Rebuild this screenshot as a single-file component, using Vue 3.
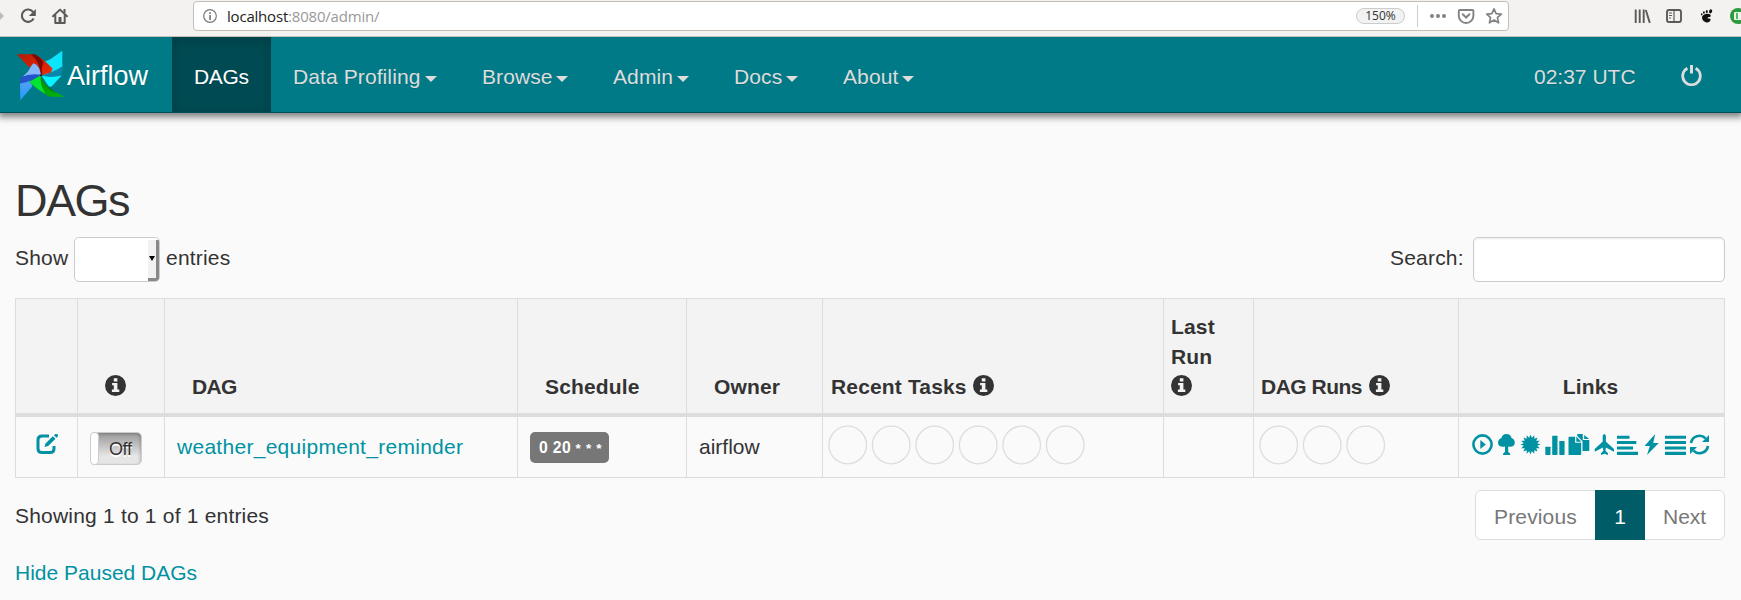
<script setup>
const menus = [
  { label: 'Data Profiling', cls: 'm-data' },
  { label: 'Browse', cls: 'm-browse' },
  { label: 'Admin', cls: 'm-admin' },
  { label: 'Docs', cls: 'm-docs' },
  { label: 'About', cls: 'm-about' },
]
const burst = Array.from({ length: 32 }, (_, i) => {
  const r = i % 2 ? 6.9 : 10
  const a = (i * Math.PI) / 16
  return `${(10.5 + r * Math.sin(a)).toFixed(2)},${(10.5 - r * Math.cos(a)).toFixed(2)}`
}).join(' ')
const infoPath =
  'M10.5 0a10.5 10.5 0 1 0 0 21a10.5 10.5 0 1 0 0-21zM8.8 3.2h3.6v3.2H8.800zM7.100 8h5.300v6.600h1.900v2.400H6.900v-2.400h1.900v-4.300H7.100z'
</script>

<template>
  <div class="page">
    <div class="chrome">
      <svg class="tools-left" viewBox="0 0 80 36" width="80" height="36" fill="none" stroke="#5b5a58">
        <path d="M0 12l4 4-4 4z" fill="#bbb" stroke="none" />
        <path d="M33.2 12.2A6.2 6.2 0 1 0 33.6 18.5" stroke-width="2.1" />
        <path d="M35.8 9v7h-7z" fill="#5b5a58" stroke="none" />
        <path d="M53 16.3L60 9.6l7 6.7M55.3 15v8h9.4v-8" stroke-width="2" stroke-linejoin="round" stroke-linecap="round" />
        <path d="M58.5 17h3v5.5h-3zM63.5 9h2v4h-2z" fill="#5b5a58" stroke="none" />
      </svg>
      <div class="urlbar">
        <svg class="site-info" viewBox="0 0 14 14" width="14" height="14">
          <circle cx="7" cy="7" r="6.3" fill="none" stroke="#7a7a7a" stroke-width="1.2" />
          <path d="M6.2 3.2h1.7v1.7H6.2zM6.2 6h1.7v5H6.2z" fill="#7a7a7a" />
        </svg>
        <span class="url"><b>localhost</b>:8080/admin/</span>
        <span class="zoom-level">150%</span>
        <span class="sep"></span>
        <svg class="url-actions" viewBox="0 0 74 18" width="74" height="18" fill="none" stroke="#838383">
          <g fill="#838383" stroke="none"><circle cx="2" cy="9" r="2" /><circle cx="8" cy="9" r="2" /><circle cx="14" cy="9" r="2" /></g>
          <path d="M29.8 3h12.6q1 0 1 1v4.7a7.3 7.3 0 0 1-14.6 0V4q0-1 1-1z" stroke-width="1.9" />
          <path d="M32.8 7.3l3.3 3.2 3.3-3.2" stroke-width="2" stroke-linecap="round" />
          <path d="M64 1.8l2.1 4.8 5.2.5-3.9 3.5 1.2 5.2-4.6-2.8-4.6 2.8 1.2-5.2-3.9-3.5 5.2-.5z" stroke-width="1.7" stroke-linejoin="round" />
        </svg>
      </div>
      <svg class="tools-right" viewBox="0 0 108 36" width="108" height="36">
        <path d="M2.7 9.5v13.4M6.7 9.5v13.4M10.7 9.5v13.4M12.8 10l4 12.9" fill="none" stroke="#5b5a58" stroke-width="1.9" />
        <rect x="34" y="10" width="14" height="12" rx="2" fill="none" stroke="#5b5a58" stroke-width="1.9" />
        <path d="M41 10v12M36 13h3M36 15.5h3M36 18h2" fill="none" stroke="#5b5a58" stroke-width="1.2" />
        <g fill="#111">
          <path d="M70.500 15c3-2.200 7.300-1.500 7.300.800 0 1.700-3.300 1.100-3.300 2.300 0 .9 2.600 0 3 1.200.4 1.800-1.800 3.400-3.700 3.200-2.800-.3-4.800-3-4.800-5 0-1.200.7-2 1.500-2.500z" />
          <ellipse cx="77.600" cy="11.400" rx="1.500" ry="2.100" transform="rotate(25 77.600 11.400)" /><ellipse cx="73.800" cy="11.500" rx="1" ry="1.500" /><ellipse cx="70.900" cy="12.500" rx=".9" ry="1.200" /><ellipse cx="68.700" cy="14.300" rx=".8" ry="1.100" />
        </g>
        <circle cx="105" cy="16" r="8" fill="#2e9a3e" />
        <rect x="101" y="12" width="9" height="8" rx="1" fill="#e9f5ea" />
        <path d="M104 13v6" stroke="#2e9a3e" stroke-width="1.500" />
      </svg>
    </div>

    <nav class="navbar">
      <div class="brand">
        <svg class="logo" viewBox="48 42 150 152" width="50" height="51">
          <defs>
            <linearGradient id="red" x1="0" y1="0" x2="1" y2="1"><stop offset="0" stop-color="#b51a05" /><stop offset="1" stop-color="#f02a06" /></linearGradient>
            <linearGradient id="green" x1="0" y1="0" x2="1" y2="1"><stop offset="0" stop-color="#018a06" /><stop offset="1" stop-color="#04b80c" /></linearGradient>
            <linearGradient id="blue" x1="0" y1="0" x2="0" y2="1"><stop offset="0" stop-color="#55a0f5" /><stop offset="1" stop-color="#1e9cff" /></linearGradient>
          </defs>
          <path d="M187 44L150 70 128 78 156 99 125 119 187 96z" fill="#0ce4fa" />
          <path d="M187 90Q165 106 125 119 160 130 183 118 187 105 187 90z" fill="#0a86ac" />
          <path d="M125 119Q155 126 185 118L154 152 146 150z" fill="#08f4ff" />
          <path d="M50 54H102Q130 66 158 98L152 109 124 117Q120 88 102 83L88 94z" fill="url(#red)" />
          <path d="M92 54H104Q122 62 131 80 122 94 127 115L122 114Q121 78 92 54z" fill="#7d0b02" />
          <path d="M100 81Q118 86 123 116L68 121Q84 110 92 92z" fill="#86b6fb" />
          <path d="M62 124Q90 110 123 116L92 139 61 146z" fill="#2454cc" />
          <path d="M60 142Q76 141 91 134L97 150 61 192z" fill="url(#blue)" />
          <path d="M88 137L122 118Q133 158 196 182H150Q126 172 88 137z" fill="url(#green)" />
          <path d="M88 137L122 118Q119 145 136 172 114 163 88 137z" fill="#03e533" />
          <path d="M122 119Q129 146 151 157L168 172Q134 156 122 119z" fill="#036b08" />
          <circle cx="123" cy="117" r="3" fill="#123" />
        </svg>
        <span class="brand-name">Airflow</span>
      </div>
      <div class="item active">DAGs</div>
      <div v-for="m in menus" :key="m.label" class="item" :class="m.cls">
        <span>{{ m.label }}</span><i class="caret"></i>
      </div>
      <div class="clock">02:37 UTC</div>
      <svg class="power" viewBox="0 0 21 21" width="21" height="21" fill="none" stroke="#dddcdc">
        <path d="M6.400 3.200a8.800 8.800 0 1 0 8.200 0" stroke-width="2.800" />
        <path d="M10.500 0v8.500" stroke-width="3" />
      </svg>
    </nav>

    <main class="content">
      <h2>DAGs</h2>
      <div class="controls">
        <label class="show">Show</label>
        <div class="select"><div class="select-btn"><i></i></div></div>
        <label class="entries">entries</label>
        <label class="search">Search:</label>
        <div class="search-input"></div>
      </div>

      <div class="grid head">
        <div class="cell"></div>
        <div class="cell c-info"><svg class="info" viewBox="0 0 21 21"><path :d="infoPath" fill-rule="evenodd" /></svg></div>
        <div class="cell sortable tight">DAG</div>
        <div class="cell sortable">Schedule</div>
        <div class="cell sortable">Owner</div>
        <div class="cell"><span>Recent Tasks</span><svg class="info" viewBox="0 0 21 21"><path :d="infoPath" fill-rule="evenodd" /></svg></div>
        <div class="cell stacked"><span>Last<br />Run</span><svg class="info" viewBox="0 0 21 21"><path :d="infoPath" fill-rule="evenodd" /></svg></div>
        <div class="cell dag-runs"><span>DAG Runs</span><svg class="info" viewBox="0 0 21 21"><path :d="infoPath" fill-rule="evenodd" /></svg></div>
        <div class="cell centered">Links</div>
      </div>
      <div class="grid row">
        <div class="cell c-edit">
          <svg viewBox="0 0 22 21" width="22" height="21">
            <path d="M13 2H6Q2 2 2 6v8.500q0 4 4 4h8q4 0 4-4V12" fill="none" stroke="#0092a2" stroke-width="3" />
            <path d="M8.500 13l1-3.600 7.300-7.200 2.700 2.600-7.300 7.300zM18 1.200L19.300 0 22 .2l-.2 2.200-1.300 1.300z" fill="#0092a2" />
          </svg>
        </div>
        <div class="cell c-toggle"><div class="toggle"><i></i><span>Off</span></div></div>
        <div class="cell c-dag"><a>weather_equipment_reminder</a></div>
        <div class="cell c-sched"><span class="badge">0 20 <small>* * *</small></span></div>
        <div class="cell c-owner">airflow</div>
        <div class="cell c-circles"><svg width="270" height="40" class="rings"><circle v-for="n in 6" :key="n" :cx="19.700 + (n - 1) * 43.500" cy="20" r="18.800" /></svg></div>
        <div class="cell"></div>
        <div class="cell c-circles"><svg width="140" height="40" class="rings"><circle v-for="n in 3" :key="n" :cx="19.700 + (n - 1) * 43.500" cy="20" r="18.800" /></svg></div>
        <div class="cell c-links">
          <svg viewBox="0 0 21 21"><circle cx="10.500" cy="10.500" r="9.100" fill="none" stroke="#0092a2" stroke-width="2.600" /><path d="M8.300 6v9l5.500-4.500z" /></svg>
          <svg viewBox="0 0 21 21"><path d="M10.500 0c3 0 4.800 1.700 5 4 2.300.7 3.300 2.600 3.300 4.700 0 3-3 4.800-6.600 3.700v5.400l2 2V21H7v-1.200l2-2v-5.400C5.200 13.500 2 12 2 8.700 2 6.500 3.200 4.700 5.500 4c.2-2.300 2-4 5-4z" /></svg>
          <svg viewBox="0 0 21 21"><polygon :points="burst" /></svg>
          <svg viewBox="0 0 21 21"><rect x="1.300" y="12.700" width="5.200" height="8.200" rx=".6" /><rect x="8.200" y="1.700" width="5.300" height="19.200" rx=".6" /><rect x="15.300" y="7" width="5.300" height="13.900" rx=".6" /></svg>
          <svg viewBox="0 0 21 21"><path d="M-.5 3.500q0-.7.700-.7h5.900v6h6.100v11.400q0 .7-.7.700H.2q-.7 0-.7-.7zM7.300 2.500l5 5.200H7.300zM8.300 0h5.500v6h6.500v10.300q0 .7-.7.700h-6.100V7.300L8.300 1.900zM15.200 1l5 4H15.200z" /></svg>
          <svg viewBox="0 0 21 21"><path d="M9.700 1.800Q11.300-1.800 12.900 1.800V7.500l1.200 1.300 6.900 6.200v2.700l-8.200-4.200-.3 3.200 2.500 2.500V21l-3.500-1.300L8 21v-1.800l2.300-2.500-.4-3.200-8.200 4.200V15l6.800-6.200 1.200-1.300z" /></svg>
          <svg viewBox="0 0 21 21"><path d="M0 1.700h12.500v3H0zM0 7h19.300v3H0zM0 12.400h16v3H0zM0 17.800h21v3.100H0z" /></svg>
          <svg viewBox="0 0 21 21"><path d="M14.200 0L3.500 12h5.300L6 21 17.800 9h-5.600z" /></svg>
          <svg viewBox="0 0 21 21"><path d="M0 1.700h21v3H0zM0 7h21v3H0zM0 12.400h21v3H0zM0 17.800h21v3.100H0z" /></svg>
          <svg viewBox="0 0 21 21"><path d="M2 9A8.500 8.500 0 0 1 16.500 4.400M19 12A8.500 8.500 0 0 1 4.500 16.600" fill="none" stroke="#0092a2" stroke-width="2.700" /><path d="M20 1v7h-7zM1 20v-7h7z" /></svg>
        </div>
      </div>

      <div class="footer">
        <div class="summary">Showing 1 to 1 of 1 entries</div>
        <div class="pager"><span class="prev">Previous</span><span class="cur">1</span><span class="next">Next</span></div>
      </div>
      <a class="hide">Hide Paused DAGs</a>
    </main>
  </div>
</template>

<style>
body { margin: 0; background: #fafafa; }
</style>

<style scoped>
.page { height: 600px; overflow: hidden; background: #fafafa; color: #333; font: 21px/30px "Liberation Sans", Arial, sans-serif; box-sizing: border-box; }
.page * { box-sizing: border-box; }
.chrome { height: 37px; display: flex; align-items: flex-start; background: #f3f2f0; border-bottom: 1px solid #c5bfb9; position: relative; z-index: 1; }
.tools-left { flex: none; }
.urlbar { margin: 1px 0 0 113px; width: 1316px; height: 30px; flex: none; border: 1px solid #c4beb9; border-radius: 4px; background: #fff; display: flex; align-items: center; padding-left: 9px; }
.url { margin-left: 10px; width: 1126px; font: 15px/20px "Open Sans", "Noto Sans", sans-serif; color: #999; white-space: nowrap; letter-spacing: -0.2px; }
.url b { font-weight: 400; color: #222; }
.zoom-level { width: 49px; height: 16px; flex: none; margin-left: 3px; border: 1px solid #ccc; border-radius: 8px; background: #f2f2f2; text-align: center; font: 12px/14px "Open Sans", "Noto Sans", sans-serif; color: #333; }
.sep { width: 1px; height: 22px; background: #ccc; margin: 0 12px 0 12px; }
.url-actions { flex: none; }
.tools-right { margin-left: 124px; flex: none; }

.navbar { height: 76px; display: flex; align-items: stretch; background: #007a87; border-bottom: 1px solid #00505a; box-shadow: 0 2px 7px 2px rgba(0, 0, 0, .5); line-height: 80px; color: #dedcdc; position: relative; text-shadow: 0 1px 0 rgba(0, 0, 0, .15); }
.brand { width: 172px; display: flex; padding-left: 16px; color: #fff; font-size: 27px; }
.logo { margin-top: 13px; flex: none; }
.brand-name { margin-left: 1px; line-height: 79px; }
.item { display: flex; padding: 0 22px; white-space: nowrap; align-items: stretch; letter-spacing: .1px; }
.item.active { width: 99px; color: #fff; background: #004b53; box-shadow: inset 0 3px 13px rgba(0, 0, 0, .18); letter-spacing: -.3px; }
.caret { margin: 39px 1px 0 auto; width: 0; height: 0; border: 6px solid transparent; border-top-color: #dedcdc; border-bottom: 0; }
.m-data { width: 189px; }
.m-browse { width: 131px; }
.m-admin { width: 121px; }
.m-docs { width: 109px; }
.m-about { width: 116px; }
.clock { margin-left: auto; width: 147px; white-space: nowrap; }
.power { margin: 28px 39px 0 0; flex: none; }

.content { padding: 63px 16px 0 15px; }
h2 { margin: 0; font-size: 45px; line-height: 49px; height: 50px; font-weight: 400; letter-spacing: -1.500px; }
.controls { margin-top: 11px; height: 45px; display: flex; line-height: 42px; letter-spacing: .2px; }
.show { width: 59px; }
.select { width: 86px; height: 45px; border: 1px solid #ccc; border-radius: 5px; background: #fff; display: flex; justify-content: flex-end; overflow: hidden; }
.select-btn { width: 11px; margin-top: 2px; border-right: 3px solid #888; border-bottom: 3px solid #888; background: #f2f1f0; }
.select-btn i { display: block; margin: 16px 0 0 1px; border: 3.500px solid transparent; border-top: 5px solid #000; border-bottom: 0; width: 0; }
.entries { margin-left: 6px; }
.search { margin-left: auto; width: 83px; }
.search-input { width: 252px; height: 45px; border: 1px solid #ccc; border-radius: 5px; background: #fff; box-shadow: inset 0 1px 2px rgba(0, 0, 0, .075); }

.grid { display: grid; grid-template-columns: 62px 87px 353px 169px 136px 341px 90px 205px 267px; }
.cell { border-left: 1px solid #ddd; display: flex; }
.cell:last-child { border-right: 1px solid #ddd; }
.head { margin-top: 16px; height: 119px; border-top: 1px solid #ddd; border-bottom: 4px solid #ddd; background: #f3f3f3; font-weight: 700; letter-spacing: .15px; }
.head .cell { align-items: flex-end; padding: 0 0 11px 8px; white-space: nowrap; }
.head .info { width: 21px; height: 21px; margin: 0 0 6px 6px; fill: #333; flex: none; }
.head .c-info { padding-left: 21px; }
.head .sortable { padding-left: 27px; }
.head .tight { letter-spacing: -.7px; }
.head .dag-runs { padding-left: 7px; letter-spacing: -.5px; }
.head .dag-runs .info { margin-left: 7px; }
.head .centered { justify-content: center; padding: 0 2px 11px 0; }
.head .stacked { flex-direction: column; align-items: flex-start; justify-content: flex-end; padding-left: 7px; }
.head .stacked .info { margin: 3px 0 6px 0; }
.row { height: 61px; border-bottom: 1px solid #ddd; }
.row .cell { align-items: center; padding-left: 12px; white-space: nowrap; }
.row .c-edit { padding: 0 0 5px 20px; }
a { color: #0092a2; }
.c-dag a { letter-spacing: .28px; }
.toggle { width: 52px; height: 33px; border: 1px solid #ccc; border-radius: 5px; background: linear-gradient(#999, #e6e6e6 75%); display: flex; margin-top: 3px; box-shadow: inset -1px 1px 3px rgba(0, 0, 0, .2); }
.toggle i { width: 9px; background: #fff; border-radius: 4px; margin: -1px 0 -1px -1px; border: 1px solid #ccc; }
.toggle span { font-size: 18px; line-height: 32px; margin-left: 10px; letter-spacing: -.4px; text-shadow: 0 1.500px 0 #fff; }
.badge { width: 79px; height: 31px; background: #777; color: #fff; border-radius: 5px; font-size: 15.750px; line-height: 32px; font-weight: 700; padding-left: 9px; margin-top: 1px; letter-spacing: .5px; word-spacing: -.5px; }
.badge small { font-size: 13.500px; letter-spacing: .7px; word-spacing: 0; }
.row .c-circles { padding: 0 0 4px 5px; }
.rings circle { fill: none; stroke: #ddd; stroke-width: 1.300; }
.row .c-links { padding: 0 0 5px 13px; gap: 3.140px; }
.c-links svg { width: 21px; height: 21px; flex: none; fill: #0092a2; overflow: visible; }

.footer { display: flex; justify-content: space-between; margin-top: 12px; height: 50px; }
.summary { line-height: 52px; letter-spacing: .2px; }
.pager { width: 250px; height: 50px; border: 1px solid #ddd; border-radius: 6px; background: #fff; display: flex; color: #777; line-height: 51px; }
.prev { width: 119px; padding-left: 18px; letter-spacing: .15px; }
.cur { width: 50px; height: 50px; margin-top: -1px; line-height: 53px; background: #005c66; color: #fff; text-align: center; }
.next { padding-left: 18px; }
.hide { display: block; margin-top: 18px; }
</style>
